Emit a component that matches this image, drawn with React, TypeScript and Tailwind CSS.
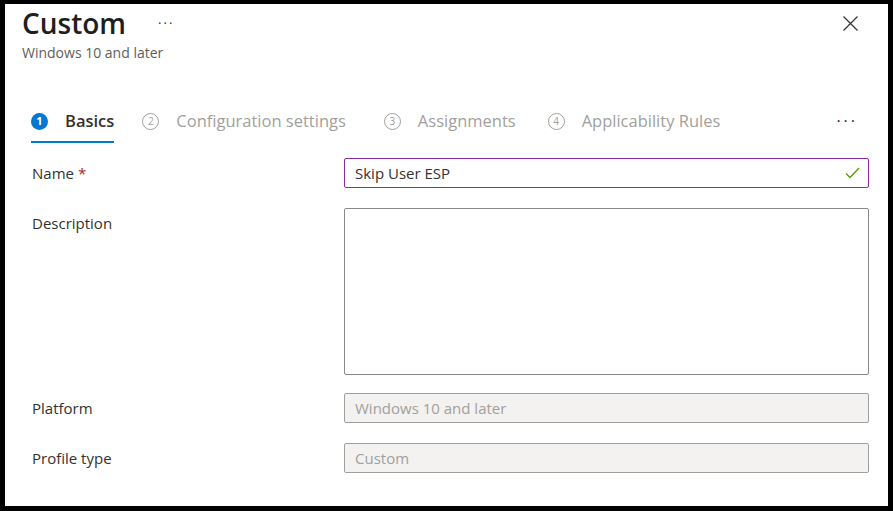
const steps = [
	{ n: 1, label: 'Basics', active: true, gap: '' },
	{ n: 2, label: 'Configuration settings', gap: 'ml-[28px]' },
	{ n: 3, label: 'Assignments', gap: 'ml-[38px]' },
	{ n: 4, label: 'Applicability Rules', gap: 'ml-[32px]' },
]

function Step({ n, label, active, gap }: { n: number; label: string; active?: boolean; gap: string }) {
	return (
		<div
			className={`flex items-center gap-[17px] h-full border-b-2 ${gap} ${
				active ? 'border-[#0078d4]' : 'border-transparent'
			}`}
		>
			{active ? (
				<span className="w-[17px] h-[17px] rounded-full bg-[#0078d4] text-white text-[11px] font-bold flex items-center justify-center">
					{n}
				</span>
			) : (
				<span className="w-[17px] h-[17px] rounded-full border border-[#a19f9d] text-[#a19f9d] text-[10px] flex items-center justify-center">
					{n}
				</span>
			)}
			<span
				className={`text-[16.5px] ${
					active ? 'font-semibold text-[#323130]' : 'text-[#a19f9d]'
				}`}
			>
				{label}
			</span>
		</div>
	)
}

function Row({ label, required, children }: { label: string; required?: boolean; children: React.ReactNode }) {
	return (
		<div className="grid grid-cols-[312px_525px]">
			<div className="h-[30px] flex items-center text-[15px] text-[#323130]">
				{label}
				{required && <span className="ml-1 text-[#a4262c]">*</span>}
			</div>
			{children}
		</div>
	)
}

export default function App() {
	return (
		<div
			className="w-[893px] h-[511px] bg-black pt-[4px] pl-[5px] pr-[5px] pb-[5px]"
			style={{ fontFamily: '"Open Sans", "Noto Sans", sans-serif' }}
		>
			<div className="w-full h-full bg-white flex flex-col">
				{/* header */}
				<div className="flex justify-between pl-[17px] pr-[30px]">
					<div className="flex flex-col">
						<div className="flex items-center h-[38px]">
							<h1 className="text-[28px] font-semibold text-[#201f1e] leading-none">Custom</h1>
							<span className="ml-[32px] text-[#323130] text-[13px] tracking-[2px] mt-[2px]">···</span>
						</div>
						<div className="text-[14px] text-[#605e5c] leading-[20px] mt-[1px]">Windows 10 and later</div>
					</div>
					<svg className="w-[15px] h-[15px] mt-[12px]" viewBox="0 0 15 15" fill="none" stroke="#323130" strokeWidth="1.2">
						<path d="M0.5 0.5l14 14M14.5 0.5l-14 14" />
					</svg>
				</div>

				{/* tabs */}
				<div className="flex items-center justify-between pl-[26px] pr-[30px] mt-[39px] h-[41px]">
					<div className="flex items-center h-full">
						{steps.map((s) => (
							<Step key={s.n} {...s} />
						))}
					</div>
					<span className="text-[#323130] text-[16px] tracking-[3px] -mt-[4px]">···</span>
				</div>

				{/* form */}
				<div className="flex flex-col pl-[27px] mt-[15px]">
					<Row label="Name" required>
						<div className="h-[30px] border border-[#8a2da5] rounded-[2px] flex items-center justify-between pl-[10px] pr-[8px]">
							<span className="text-[15px] text-[#323130]">Skip User ESP</span>
							<svg className="w-[15px] h-[12px]" viewBox="0 0 15 12" fill="none" stroke="#57a300" strokeWidth="1.4">
								<path d="M1 6.5l4 4L14 1" />
							</svg>
						</div>
					</Row>
					<div className="mt-[20px]">
						<Row label="Description">
							<div className="h-[167px] border border-[#8a8886] rounded-[2px]" />
						</Row>
					</div>
					<div className="mt-[18px]">
						<Row label="Platform">
							<div className="h-[30px] border border-[#a19f9d] bg-[#f3f2f1] rounded-[2px] flex items-center pl-[10px] text-[15px] text-[#a19f9d]">
								Windows 10 and later
							</div>
						</Row>
					</div>
					<div className="mt-[20px]">
						<Row label="Profile type">
							<div className="h-[30px] border border-[#a19f9d] bg-[#f3f2f1] rounded-[2px] flex items-center pl-[10px] text-[15px] text-[#a19f9d]">
								Custom
							</div>
						</Row>
					</div>
				</div>
			</div>
		</div>
	)
}
